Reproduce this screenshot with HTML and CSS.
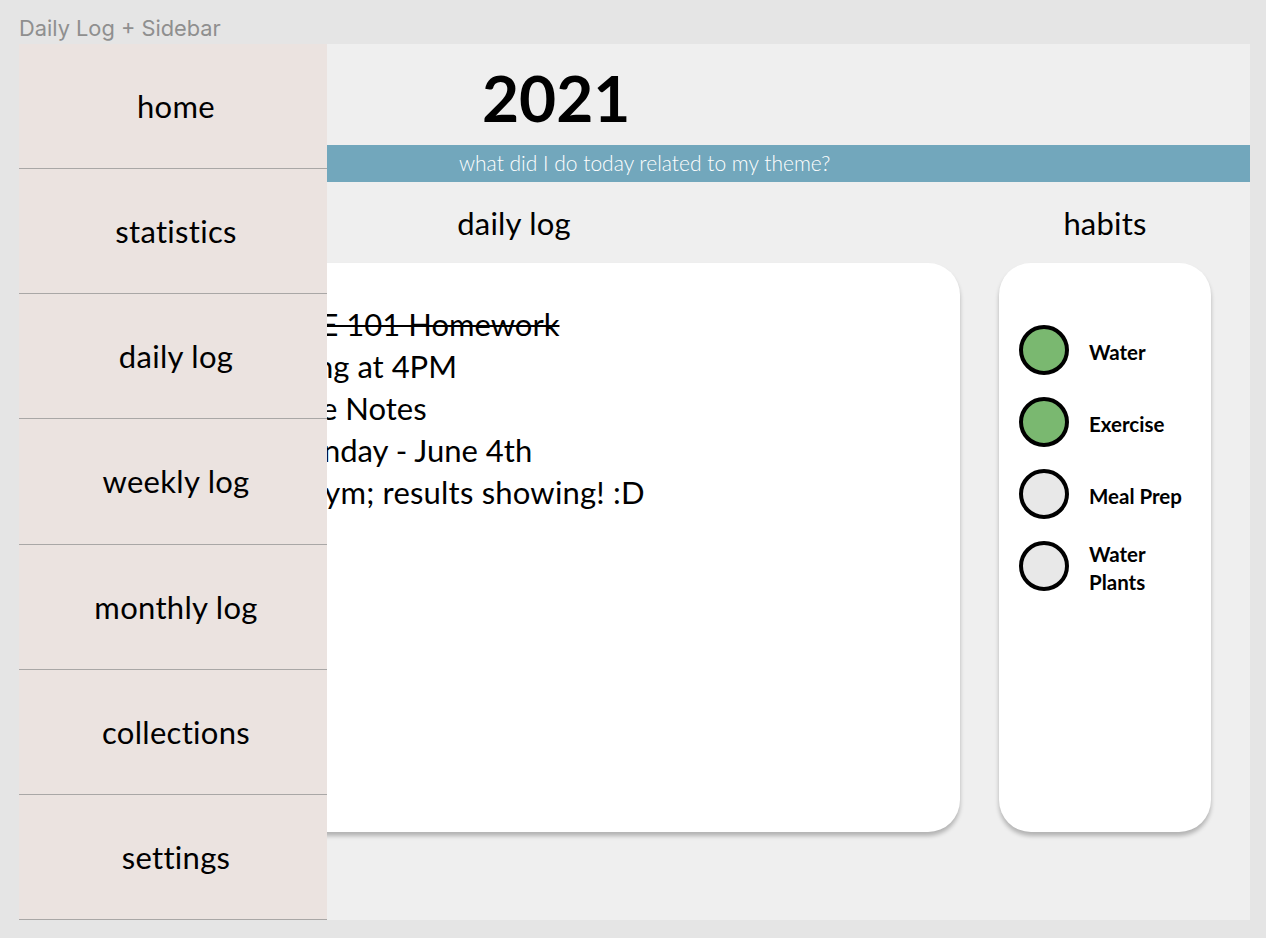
FILE: index.html
```html
<!DOCTYPE html>
<html lang="en">
<head>
<meta charset="utf-8">
<title>Daily Log + Sidebar</title>
<link rel="stylesheet" href="styles.css">
</head>
<body>
<div class="canvas-label">Daily Log + Sidebar</div>
<div class="frame">
  <main class="page">
    <header class="year">2021</header>
    <div class="prompt">what did I do today related to my theme?</div>
    <div class="columns">
      <section class="log-col">
        <h2 class="col-title">daily log</h2>
        <div class="card log-card">
          <ul class="log-list">
            <li class="log-entry done">CSE 101 Homework</li>
            <li class="log-entry">Meeting at 4PM</li>
            <li class="log-entry">Lecture Notes</li>
            <li class="log-entry">Monday - June 4th</li>
            <li class="log-entry">Gym; results showing! :D</li>
          </ul>
        </div>
      </section>
      <section class="habit-col">
        <h2 class="col-title">habits</h2>
        <div class="card habit-card">
          <div class="habit"><span class="dot on"></span><span class="habit-name">Water</span></div>
          <div class="habit"><span class="dot on"></span><span class="habit-name">Exercise</span></div>
          <div class="habit"><span class="dot"></span><span class="habit-name">Meal Prep</span></div>
          <div class="habit"><span class="dot"></span><span class="habit-name">Water<br>Plants</span></div>
        </div>
      </section>
    </div>
  </main>
  <nav class="sidebar">
    <a class="nav-item">home</a>
    <a class="nav-item">statistics</a>
    <a class="nav-item">daily log</a>
    <a class="nav-item">weekly log</a>
    <a class="nav-item">monthly log</a>
    <a class="nav-item">collections</a>
    <a class="nav-item">settings</a>
  </nav>
</div>
</body>
</html>
```
FILE: styles.css
```css
* { box-sizing: border-box; }
html, body { margin: 0; padding: 0; }
body {
  background: #e5e5e5;
  font-family: "Lato", "Noto Sans", sans-serif;
  color: #000;
  width: 1266px;
  height: 938px;
  overflow: hidden;
}
.canvas-label {
  font-family: "Inter", sans-serif;
  font-size: 21.8px;
  line-height: 24px;
  color: #8f8f8f;
  padding: 16px 0 4px 19px;
  height: 44px;
}
.frame {
  position: relative;
  margin-left: 19px;
  width: 1231px;
  height: 876px;
  background: #efefef;
  overflow: hidden;
}
.page { display: flex; flex-direction: column; }
.year {
  height: 101px;
  padding-left: 463px;
  padding-top: 17px;
  font-size: 64px;
  font-weight: 700;
  line-height: 74px;
}
.prompt {
  height: 37px;
  background: #72a7bc;
  color: #fff;
  font-size: 21px;
  font-weight: 300;
  line-height: 36px;
  padding-left: 440px;
}
.columns {
  display: flex;
  gap: 39px;
  padding-left: 49px;
}
.log-col { width: 892px; }
.habit-col { width: 212px; }
.col-title {
  margin: 0;
  height: 81px;
  line-height: 82px;
  text-align: center;
  font-size: 31px;
  font-weight: 400;
  letter-spacing: 0.2px;
}
.card {
  background: #fff;
  height: 569px;
  border-radius: 32px;
  box-shadow: 0 4px 4px rgba(0, 0, 0, 0.25);
}
.log-card { padding-top: 40px; }
.log-list {
  list-style: none;
  margin: 0;
  padding: 0;
  font-size: 31px;
  line-height: 42px;
}
.log-entry:nth-child(1) { padding-left: 215px; }
.log-entry:nth-child(2) { padding-left: 168px; }
.log-entry:nth-child(3) { padding-left: 168px; }
.log-entry:nth-child(4) { padding-left: 209px; }
.log-entry:nth-child(5) { padding-left: 234px; letter-spacing: 0.2px; }
.log-entry.done { text-decoration: line-through; text-decoration-thickness: 2px; }
.habit-card {
  padding: 62px 0 0 20px;
  display: flex;
  flex-direction: column;
  gap: 22px;
}
.habit {
  display: flex;
  align-items: center;
  gap: 20px;
  height: 50px;
}
.dot {
  flex: none;
  width: 50px;
  height: 50px;
  border-radius: 50%;
  border: 4px solid #000;
  background: #e8e8e8;
}
.dot.on { background: #7ab870; }
.habit-name {
  font-size: 20.5px;
  font-weight: 700;
  line-height: 28px;
  padding-top: 3px;
}
.sidebar {
  position: absolute;
  left: 0;
  top: 0;
  width: 308px;
  height: 876px;
  background: #ebe3e0;
  display: flex;
  flex-direction: column;
}
.nav-item {
  flex: 1;
  display: flex;
  align-items: center;
  justify-content: center;
  padding-left: 6px;
  font-size: 31px;
  letter-spacing: 0.3px;
  border-bottom: 1px solid #a9a7a6;
  color: #000;
}
```
